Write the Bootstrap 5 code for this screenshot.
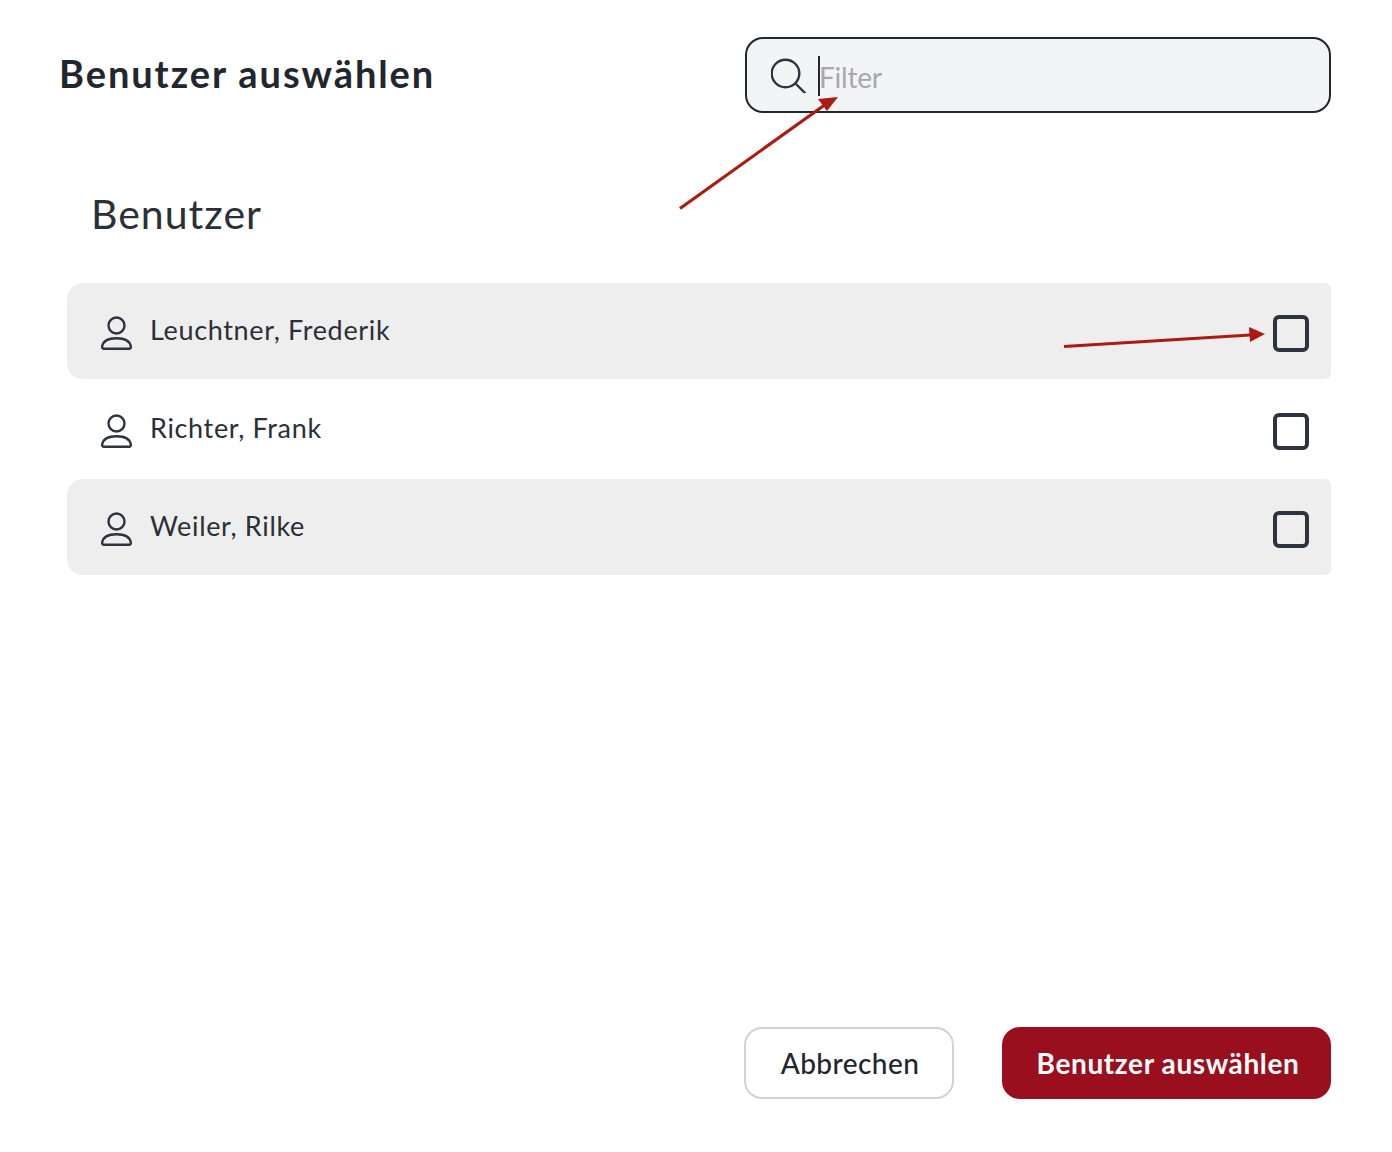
<!DOCTYPE html>
<html lang="de">
<head>
<meta charset="utf-8">
<title>Benutzer auswählen</title>
<link href="https://cdn.jsdelivr.net/npm/bootstrap@5.3.0/dist/css/bootstrap.min.css" rel="stylesheet">
<style>
body { font-family: Lato, "Open Sans", sans-serif; color: #22262e; background: #fff; }
.page-wrap { position: relative; width: 1392px; height: 1152px; padding: 37px 61px 53px 59px; }
.head-row { height: 76px; }
.page-title { font-size: 38px; font-weight: 700; margin: 0 0 4px; line-height: 72px; color: #22262e; letter-spacing: 1.92px; }
.search-box { width: 586px; height: 76px; background: #f3f4f6; border: 2px solid #22262e; border-radius: 18px; padding-left: 24px; }
.search-text { font-size: 28px; color: #a6a8ad; border-left: 2px solid #22262e; height: 40px; line-height: 42px; margin-left: 11px; margin-top: 2px; text-indent: -1px; letter-spacing: -.2px; }
.section-name { font-size: 41px; font-weight: 400; margin: 74px 0 0 32px; line-height: 54px; color: #2b2f37; letter-spacing: 1px; }
.user-list { margin: 42px 0 0 8px; gap: 2px; }
.user-row { height: 96px; padding: 0 22px 0 33px; border-radius: 16px 6px 6px 16px; }
.user-row.tinted { background: #eeeeee; }
.user-name { font-size: 27px; margin-left: 17px; position: relative; top: -1px; color: #2b2f37; letter-spacing: .66px; }
.tick-box { width: 36px; height: 37px; border: 4px solid #2e3340; border-radius: 6px; margin-top: 4px; }
.foot-row { margin-top: 452px; gap: 48px; }
.btn-plain, .btn-main { height: 72px; font-size: 28px; border-radius: 18px; font-weight: 500; }
.btn-plain { width: 210px; padding: 0 0 0 2px; background: #fff; border: 2px solid #d2d2d2; color: #22262e; letter-spacing: .45px; }
.btn-main { width: 329px; padding: 0 0 0 3px; background: #9a0f1e; border: 0; color: #fff; font-weight: 700; letter-spacing: .62px; }
.btn-plain:hover { background: #fff; border-color: #d2d2d2; color: #22262e; }
.btn-main:hover { background: #9a0f1e; color: #fff; }
.arrow-layer { position: absolute; left: 0; top: 0; pointer-events: none; }
</style>
</head>
<body>
<div class="page-wrap">
  <div class="head-row d-flex justify-content-between align-items-center">
    <h1 class="page-title">Benutzer auswählen</h1>
    <div class="search-box d-flex align-items-center">
      <svg width="36" height="36" viewBox="0 0 36 36" fill="none" stroke="#2e3340" stroke-width="2.4" stroke-linecap="round" aria-hidden="true"><circle cx="14.5" cy="16.500" r="13.800"/><path d="M25 27l9 9"/></svg>
      <div class="search-text">Filter</div>
    </div>
  </div>
  <h2 class="section-name">Benutzer</h2>
  <div class="user-list d-flex flex-column">
    <div class="user-row tinted d-flex align-items-center justify-content-between">
      <div class="d-flex align-items-center">
        <svg width="33" height="40" viewBox="0 0 33 40" fill="none" stroke="#2e3340" stroke-width="2.4" aria-hidden="true"><circle cx="16.500" cy="14.500" r="8"/><path d="M4 37.800c-1.500 0-2-1-1.800-2.500C3.200 30 9 27.200 16.500 27.200S29.800 30 30.800 35.300c.2 1.500-.3 2.500-1.800 2.500z"/></svg>
        <span class="user-name">Leuchtner, Frederik</span>
      </div>
      <div class="tick-box"></div>
    </div>
    <div class="user-row d-flex align-items-center justify-content-between">
      <div class="d-flex align-items-center">
        <svg width="33" height="40" viewBox="0 0 33 40" fill="none" stroke="#2e3340" stroke-width="2.4" aria-hidden="true"><circle cx="16.500" cy="14.500" r="8"/><path d="M4 37.800c-1.500 0-2-1-1.800-2.500C3.200 30 9 27.200 16.500 27.200S29.800 30 30.800 35.300c.2 1.500-.3 2.500-1.800 2.500z"/></svg>
        <span class="user-name">Richter, Frank</span>
      </div>
      <div class="tick-box"></div>
    </div>
    <div class="user-row tinted d-flex align-items-center justify-content-between">
      <div class="d-flex align-items-center">
        <svg width="33" height="40" viewBox="0 0 33 40" fill="none" stroke="#2e3340" stroke-width="2.4" aria-hidden="true"><circle cx="16.500" cy="14.500" r="8"/><path d="M4 37.800c-1.500 0-2-1-1.800-2.500C3.200 30 9 27.200 16.500 27.200S29.800 30 30.800 35.300c.2 1.500-.3 2.500-1.800 2.500z"/></svg>
        <span class="user-name">Weiler, Rilke</span>
      </div>
      <div class="tick-box"></div>
    </div>
  </div>
  <div class="foot-row d-flex justify-content-end">
    <button type="button" class="btn btn-plain">Abbrechen</button>
    <button type="button" class="btn btn-main">Benutzer auswählen</button>
  </div>
  <svg class="arrow-layer" width="1392" height="1152" viewBox="0 0 1392 1152" aria-hidden="true">
    <path d="M680 208.500L826 104" stroke="#ac1b10" stroke-width="3.200" fill="none"/>
    <path d="M838 97l-20 2 9 12z" fill="#ac1b10"/>
    <path d="M1064 346.500L1250 335" stroke="#ac1b10" stroke-width="3.200" fill="none"/>
    <path d="M1265 334l-16-7 1 15z" fill="#ac1b10"/>
  </svg>
</div>
<script src="https://cdn.jsdelivr.net/npm/bootstrap@5.3.0/dist/js/bootstrap.bundle.min.js"></script>
</body>
</html>
